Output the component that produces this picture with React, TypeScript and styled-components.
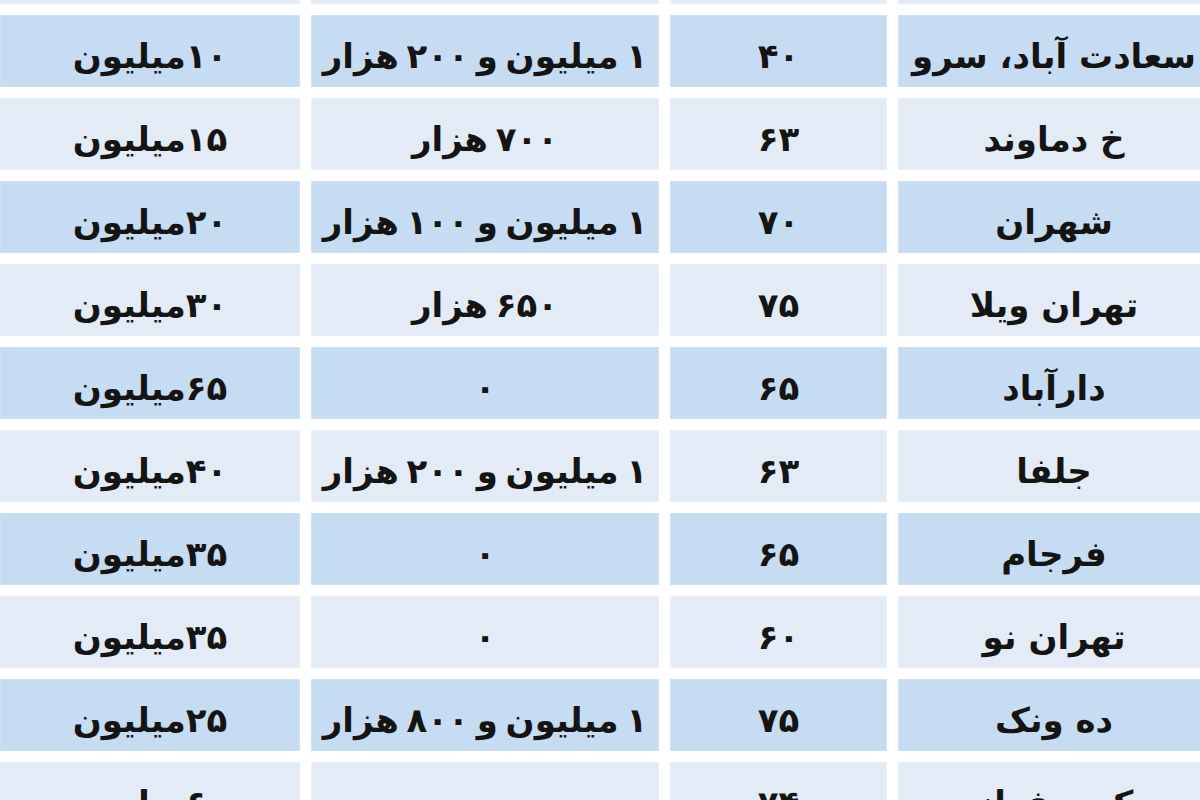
import React from "react";
import styled, { createGlobalStyle } from "styled-components";

const GlobalStyle = createGlobalStyle`
  html, body {
    margin: 0;
    padding: 0;
    background: #ffffff;
    overflow: hidden;
  }
`;

const Table = styled.div`
  width: 1210px;
  margin-top: -68px;
  display: grid;
  grid-template-columns: 300px 348px 217px 312px;
  grid-auto-rows: 72px;
  column-gap: 11px;
  row-gap: 11px;
`;

const Cell = styled.div<{ $shade: "blue" | "light"; $tight?: boolean }>`
  display: flex;
  align-items: center;
  justify-content: center;
  direction: rtl;
  box-sizing: border-box;
  background: ${(p) => (p.$shade === "blue" ? "#c6dcf2" : "#e3ebf6")};
  border: 1px solid ${(p) => (p.$shade === "blue" ? "#cfe2f4" : "#e9eff8")};
  font-family: "DejaVu Sans", "Noto Sans", sans-serif;
  font-weight: bold;
  font-size: 34px;
  color: #141414;
  white-space: nowrap;
  padding-top: 10px;
  word-spacing: ${(p) => (p.$tight ? "-4px" : "normal")};
`;

type Row = {
  place: string;
  area: string;
  rent: string;
  deposit: string;
};

const rows: Row[] = [
  { place: "", area: "", rent: "", deposit: "" },
  { place: "سعادت آباد، سرو", area: "۴۰", rent: "۱ میلیون و ۲۰۰ هزار", deposit: "۱۰میلیون" },
  { place: "خ دماوند", area: "۶۳", rent: "۷۰۰ هزار", deposit: "۱۵میلیون" },
  { place: "شهران", area: "۷۰", rent: "۱ میلیون و ۱۰۰ هزار", deposit: "۲۰میلیون" },
  { place: "تهران ویلا", area: "۷۵", rent: "۶۵۰ هزار", deposit: "۳۰میلیون" },
  { place: "دارآباد", area: "۶۵", rent: "۰", deposit: "۶۵میلیون" },
  { place: "جلفا", area: "۶۳", rent: "۱ میلیون و ۲۰۰ هزار", deposit: "۴۰میلیون" },
  { place: "فرجام", area: "۶۵", rent: "۰", deposit: "۳۵میلیون" },
  { place: "تهران نو", area: "۶۰", rent: "۰", deposit: "۳۵میلیون" },
  { place: "ده ونک", area: "۷۵", rent: "۱ میلیون و ۸۰۰ هزار", deposit: "۲۵میلیون" },
  { place: "کوی فراز", area: "۷۴", rent: "", deposit: "۶۰میلیون" },
];

export default function App() {
  return (
    <>
      <GlobalStyle />
      <Table>
        {rows.map((r, i) => {
          const shade = i % 2 === 1 ? "blue" : "light";
          return (
            <React.Fragment key={i}>
              <Cell $shade={shade}>{r.deposit}</Cell>
              <Cell $shade={shade} $tight>
                {r.rent}
              </Cell>
              <Cell $shade={shade}>{r.area}</Cell>
              <Cell $shade={shade}>{r.place}</Cell>
            </React.Fragment>
          );
        })}
      </Table>
    </>
  );
}
